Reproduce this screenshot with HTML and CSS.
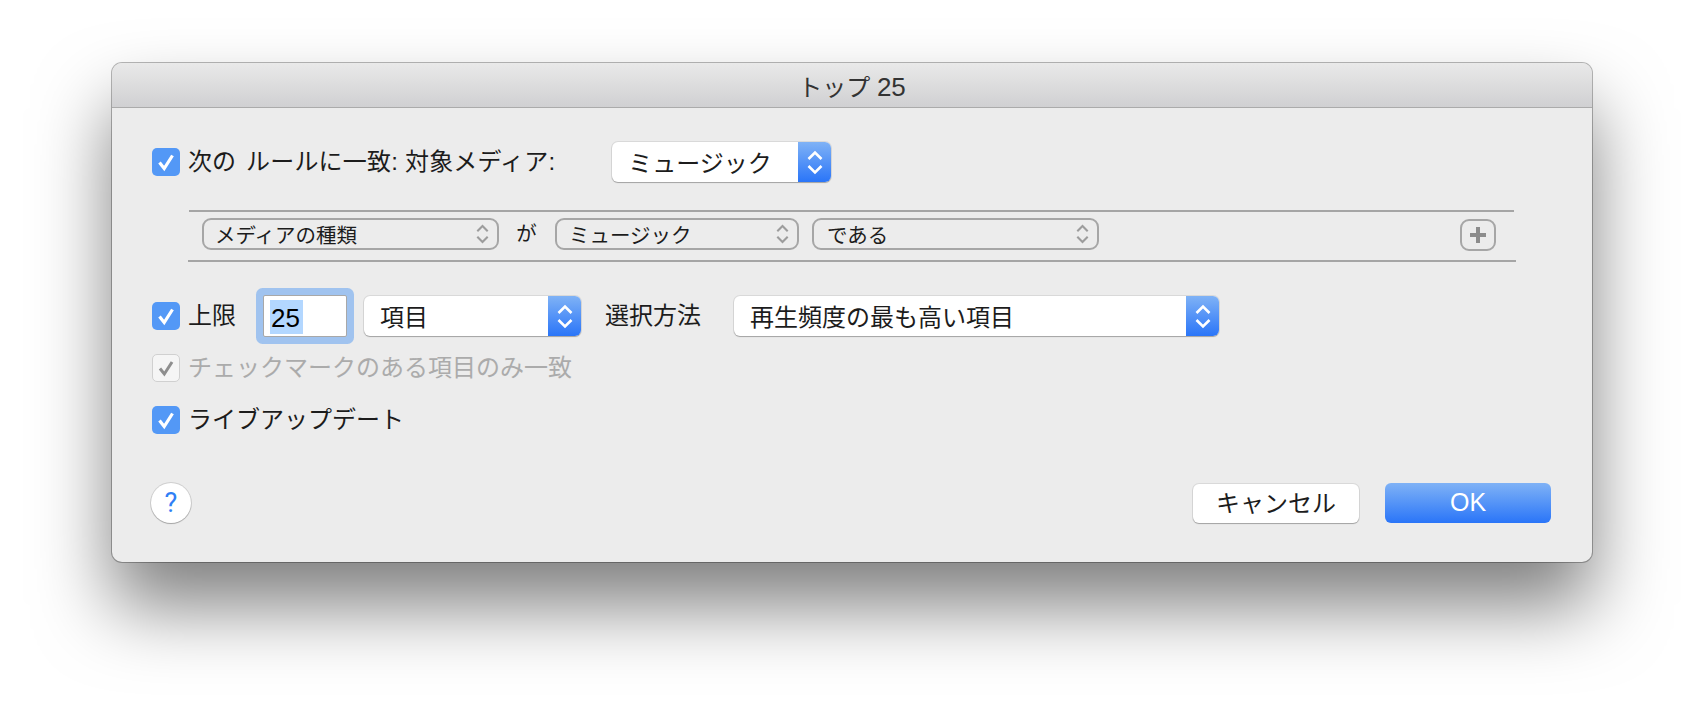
FILE: index.html
```html
<!DOCTYPE html>
<html lang="ja">
<head>
  <meta charset="UTF-8" />
  <meta name="viewport" content="width=device-width, initial-scale=1.0"/>
  <title>トップ 25</title>
  <link rel="stylesheet" href="styles.css">
</head>
<body>
  <svg class="defs" width="0" height="0" aria-hidden="true">
    <symbol id="updown" viewBox="0 0 16 25">
      <path d="M1.5 9 L8 2.5 L14.5 9 M1.5 16 L8 22.5 L14.5 16" fill="none" stroke="currentColor" stroke-width="2.6"/>
    </symbol>
    <symbol id="tick" viewBox="0 0 28 28">
      <path d="M7.5 14.5 L12.2 20.5 L20.5 7.5" fill="none" stroke="currentColor" stroke-width="3.2"/>
    </symbol>
  </svg>

  <div class="window">
    <header class="titlebar">トップ <span class="num">25</span></header>

    <main class="content">
      <div class="row row-match">
        <span class="check"><svg><use href="#tick"/></svg></span>
        <span class="label match-first">次の</span>
        <span class="label match-rest">ルールに一致: 対象メディア:</span>
        <div class="popup popup-media">
          <span class="popup-text">ミュージック</span>
          <span class="stepper"><svg><use href="#updown"/></svg></span>
        </div>
      </div>

      <div class="rule-line rule-line-top"></div>
      <div class="rule">
        <div class="mini mini-kind">メディアの種類<svg><use href="#updown"/></svg></div>
        <span class="rule-word">が</span>
        <div class="mini mini-value">ミュージック<svg><use href="#updown"/></svg></div>
        <div class="mini mini-op">である<svg><use href="#updown"/></svg></div>
        <div class="add">
          <svg width="18" height="18" viewBox="0 0 18 18"><path d="M7 1h4v6h6v4h-6v6H7v-6H1V7h6z" fill="#8c8c8c"/></svg>
        </div>
      </div>
      <div class="rule-line rule-line-bottom"></div>

      <div class="row row-limit">
        <span class="check"><svg><use href="#tick"/></svg></span>
        <span class="label">上限</span>
        <div class="field"><span class="selected">25</span></div>
        <div class="popup popup-unit">
          <span class="popup-text">項目</span>
          <span class="stepper"><svg><use href="#updown"/></svg></span>
        </div>
        <span class="label label-method">選択方法</span>
        <div class="popup popup-method">
          <span class="popup-text">再生頻度の最も高い項目</span>
          <span class="stepper"><svg><use href="#updown"/></svg></span>
        </div>
      </div>

      <div class="row row-checked">
        <span class="check check-off"><svg><use href="#tick"/></svg></span>
        <span class="label label-off">チェックマークのある項目のみ一致</span>
      </div>

      <div class="row row-live">
        <span class="check"><svg><use href="#tick"/></svg></span>
        <span class="label">ライブアップデート</span>
      </div>

      <footer class="footer">
        <div class="help">?</div>
        <div class="btn btn-cancel">キャンセル</div>
        <div class="btn btn-ok">OK</div>
      </footer>
    </main>
  </div>
</body>
</html>
```

FILE: styles.css
```css
html, body { margin: 0; height: 100%; }
body {
  background: #ffffff;
  color: #1c1c1c;
  font-family: "Liberation Sans", "Noto Sans CJK JP", sans-serif;
  font-size: 24px;
  overflow: hidden;
}
.defs { position: absolute; }

.window {
  width: 1480px;
  height: 499px;
  margin: 63px 0 0 112px;
  background: #ececec;
  border-radius: 10px;
  box-shadow: 0 0 0 1px rgba(0, 0, 0, 0.28), 0 44px 74px rgba(0, 0, 0, 0.5);
}
.titlebar {
  box-sizing: border-box;
  height: 45px;
  line-height: 49px;
  text-align: center;
  color: #333;
  background: linear-gradient(#e9e9e9, #d0d0d2);
  border-bottom: 1px solid #ababab;
  border-radius: 10px 10px 0 0;
}
.num { font-size: 26px; }
.content { padding: 0 41px 0 40px; }

.row { display: flex; align-items: center; }
.row-match { height: 40px; margin-top: 34px; }
.row-limit { height: 56px; margin-top: 26px; }
.row-checked { height: 28px; margin-top: 10px; }
.row-live { height: 28px; margin-top: 24px; }

.label { line-height: 30px; white-space: nowrap; }
.label-off { color: #ababab; }
.match-first { margin-right: 10px; }
.match-rest { letter-spacing: 0.2px; }
.label-method { margin-left: 24px; }

.check {
  flex: none;
  width: 28px;
  height: 28px;
  margin-right: 8px;
  color: #fff;
  background: #5398f6;
  border-radius: 5px;
}
.check svg { display: block; width: 28px; height: 28px; }
.check-off {
  box-sizing: border-box;
  color: #8e8e8e;
  background: #f5f5f5;
  border: 1px solid #d0d0d0;
}
.check-off svg { width: 26px; height: 26px; }

/* blue popups */
.popup {
  box-sizing: border-box;
  display: flex;
  align-items: center;
  justify-content: space-between;
  flex: none;
  height: 40px;
  background: #fff;
  border-radius: 6px;
  box-shadow: 0 0 0 1px rgba(0, 0, 0, 0.08), 0 1px 1px rgba(0, 0, 0, 0.25);
}
.popup-text { padding: 0 0 2px 16px; white-space: nowrap; }
.popup-media { width: 219px; margin-left: 57px; }
.popup-unit { width: 217px; margin-left: 17px; }
.popup-method { width: 485px; margin-left: 33px; }
.stepper {
  display: flex;
  align-items: center;
  justify-content: center;
  width: 33px;
  height: 40px;
  color: #fff;
  background: linear-gradient(#7fb2f6, #2a75f8);
  border-radius: 0 6px 6px 0;
}
.stepper svg { width: 16px; height: 25px; }

/* rule box */
.rule-line { height: 2px; background: #a5a5a5; }
.rule-line-top { width: 1325px; margin: 28px 0 0 37px; }
.rule-line-bottom { width: 1328px; margin: 0 0 0 36px; }
.rule {
  display: flex;
  align-items: flex-start;
  box-sizing: border-box;
  width: 1328px;
  height: 48px;
  margin-left: 36px;
  padding: 6px 20px 0 14px;
  font-size: 20.5px;
}
.mini {
  box-sizing: border-box;
  display: flex;
  align-items: center;
  justify-content: space-between;
  flex: none;
  height: 32px;
  padding: 0 8px 0 11px;
  border: 2px solid #a6a6a6;
  border-radius: 9px;
}
.mini svg { width: 13px; height: 20px; color: #9c9c9c; }
.mini-kind { width: 297px; }
.mini-value { width: 244px; padding-left: 12px; }
.mini-op { width: 287px; margin-left: 13px; padding-left: 13px; }
.rule-word { width: 55px; padding-right: 1px; line-height: 32px; text-align: center; }
.add {
  box-sizing: border-box;
  display: flex;
  align-items: center;
  justify-content: center;
  width: 36px;
  height: 32px;
  margin: 1px 0 0 auto;
  border: 2px solid #a6a6a6;
  border-radius: 9px;
}

/* limit field */
.field {
  box-sizing: border-box;
  flex: none;
  width: 84px;
  height: 42px;
  margin-left: 27px;
  padding: 4px 0 0 6px;
  background: #fff;
  border: 1px solid #a8a8a8;
  box-shadow: 0 0 0 7px #a0c3ef;
  border-radius: 2px;
}
.selected {
  display: inline-block;
  height: 34px;
  line-height: 37px;
  padding: 0 3px 0 1px;
  font-size: 26px;
  color: #000;
  background: #b3d7ff;
}

/* bottom buttons */
.footer { display: flex; align-items: center; margin-top: 49px; }
.help {
  width: 40px;
  height: 40px;
  margin-left: -1px;
  line-height: 40px;
  text-align: center;
  font-family: Roboto, sans-serif;
  font-size: 27px;
  color: #2f7ff5;
  background: #fff;
  border-radius: 50%;
  box-shadow: 0 0 0 1px rgba(0, 0, 0, 0.12), 0 1px 1px rgba(0, 0, 0, 0.2);
}
.btn {
  width: 166px;
  height: 39px;
  line-height: 39px;
  text-align: center;
  border-radius: 6px;
}
.btn-cancel {
  margin-left: auto;
  background: #fff;
  box-shadow: 0 0 0 1px rgba(0, 0, 0, 0.08), 0 1px 1px rgba(0, 0, 0, 0.25);
}
.btn-ok {
  height: 40px;
  margin-left: 26px;
  font-size: 25px;
  color: #fff;
  background: linear-gradient(#7fb2f6, #2a75f8);
}
```
